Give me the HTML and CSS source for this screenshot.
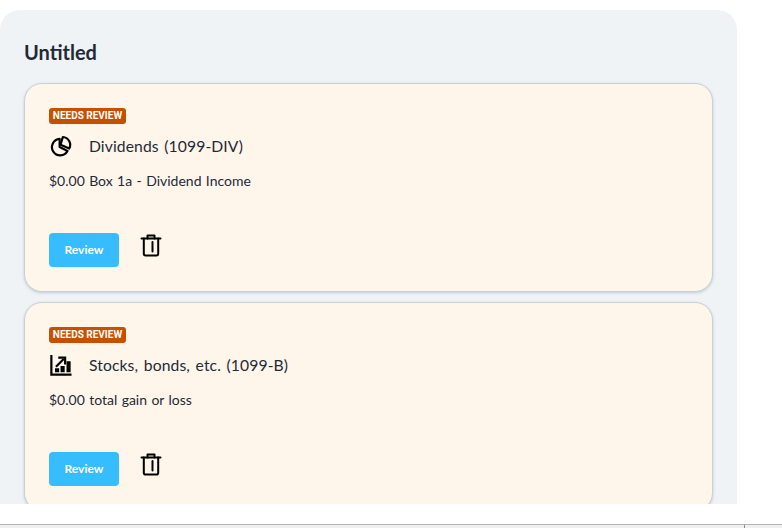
FILE: index.html
```html
<!DOCTYPE html>
<html lang="en">
<head>
  <meta charset="UTF-8">
  <title>Untitled</title>
  <link rel="stylesheet" href="styles.css">
</head>
<body>
  <div class="viewport">
    <div class="panel">
      <h2 class="panel-title">Untitled</h2>

      <div class="form-card">
        <span class="badge">NEEDS REVIEW</span>
        <div class="form-head">
          <svg class="form-icon" viewBox="0 0 24 24" fill="none" stroke="#000" stroke-width="2.4" stroke-linejoin="round">
            <path d="M10.5 4.2a9 9 0 1 0 8.6 13.2L10.5 13.2z"/>
            <path d="M14 2.2a8.6 8.6 0 0 1 7 12.6L11.5 10.6z"/>
          </svg>
          <span class="form-name">Dividends (1099-DIV)</span>
        </div>
        <p class="form-detail">$0.00 Box 1a - Dividend Income</p>
        <div class="form-actions">
          <button class="review-btn">Review</button>
          <svg class="trash-icon" viewBox="0 0 24 24" fill="none" stroke="#000" stroke-width="2" stroke-linejoin="round" stroke-linecap="round">
            <path d="M2.5 5.5h19"/>
            <path d="M8.5 5.5V2.5h7v3"/>
            <path d="M4.8 5.5v15.2c0 1 .7 1.8 1.7 1.8h11c1 0 1.7-.8 1.7-1.8V5.5"/>
            <path d="M13.5 9v9.5"/>
          </svg>
        </div>
      </div>

      <div class="form-card">
        <span class="badge">NEEDS REVIEW</span>
        <div class="form-head">
          <svg class="form-icon" viewBox="0 0 24 24" fill="none" stroke="#000" stroke-width="2.4">
            <path d="M1.5 1v21.5h22"/>
            <path d="M6.5 14l8.5-8.5"/>
            <path d="M9 4h7.5v7.5"/>
            <path d="M5.5 15.5h4.5v4.5H5.5zM11.5 13h4.5v7h-4.5zM18 8h4.5v12H18z" fill="#000" stroke="none"/>
          </svg>
          <span class="form-name">Stocks, bonds, etc. (1099-B)</span>
        </div>
        <p class="form-detail">$0.00 total gain or loss</p>
        <div class="form-actions">
          <button class="review-btn">Review</button>
          <svg class="trash-icon" viewBox="0 0 24 24" fill="none" stroke="#000" stroke-width="2" stroke-linejoin="round" stroke-linecap="round">
            <path d="M2.5 5.5h19"/>
            <path d="M8.5 5.5V2.5h7v3"/>
            <path d="M4.8 5.5v15.2c0 1 .7 1.8 1.7 1.8h11c1 0 1.7-.8 1.7-1.8V5.5"/>
            <path d="M13.5 9v9.5"/>
          </svg>
        </div>
      </div>
    </div>
  </div>
  <div class="status-bar">
    <div class="status-main"></div>
    <div class="status-side"></div>
  </div>
</body>
</html>
```

FILE: styles.css
```css
html, body {
  height: 100%;
}
body {
  margin: 0;
  height: 528px;
  overflow: hidden;
  background-color: white;
  font-family: 'Lato', 'Open Sans', sans-serif;
  color: #1f2a37;
}
.viewport {
  height: 504px;
  overflow: hidden;
}
.panel {
  width: 737px;
  box-sizing: border-box;
  margin-top: 10px;
  padding: 30px 24px 24px;
  background-color: #eff3f6;
  border-radius: 20px 20px 0 0;
}
.panel-title {
  margin: 0 0 18px;
  font-size: 20px;
  line-height: 25px;
  font-weight: 700;
  color: #1f2a37;
}
.form-card {
  box-sizing: border-box;
  height: 209px;
  margin-bottom: 10px;
  padding: 24px;
  background-color: #fff6eb;
  border: 1px solid #c8d0d8;
  border-radius: 18px;
  box-shadow: 0 1px 3px rgba(90, 110, 130, 0.3);
}
.badge {
  display: block;
  width: 77px;
  height: 16px;
  box-sizing: border-box;
  background-color: #c75000;
  border-radius: 3px;
  color: white;
  font-family: 'Roboto', 'Liberation Sans', sans-serif;
  font-size: 10px;
  line-height: 16px;
  font-weight: 700;
  text-align: center;
  white-space: nowrap;
}
.form-head {
  display: flex;
  align-items: center;
  gap: 17px;
  margin-top: 10px;
  height: 24px;
}
.form-icon {
  width: 22px;
  height: 22px;
  margin-left: 1px;
  flex: none;
}
.form-name {
  font-size: 15.7px;
  word-spacing: 1.5px;
  letter-spacing: 0.1px;
}
.form-detail {
  margin: 14px 0 0;
  font-size: 14px;
  line-height: 18px;
  word-spacing: 0.8px;
}
.form-actions {
  display: flex;
  align-items: flex-start;
  gap: 20px;
  margin-top: 43px;
}
.review-btn {
  width: 70px;
  height: 34px;
  padding: 0 0 2px;
  background-color: #35bdff;
  color: white;
  border: none;
  border-radius: 4px;
  font-family: 'Lato', sans-serif;
  font-size: 12px;
  font-weight: 700;
}
.trash-icon {
  width: 24px;
  height: 24px;
  flex: none;
}
.status-bar {
  display: flex;
  height: 4px;
  margin-top: 20px;
  border-top: 1px solid #b4b4b4;
  background-color: #f0f0f0;
}
.status-main {
  width: 744px;
  border-right: 1px solid #8c8c8c;
}
.status-side {
  flex: 1;
}
```
